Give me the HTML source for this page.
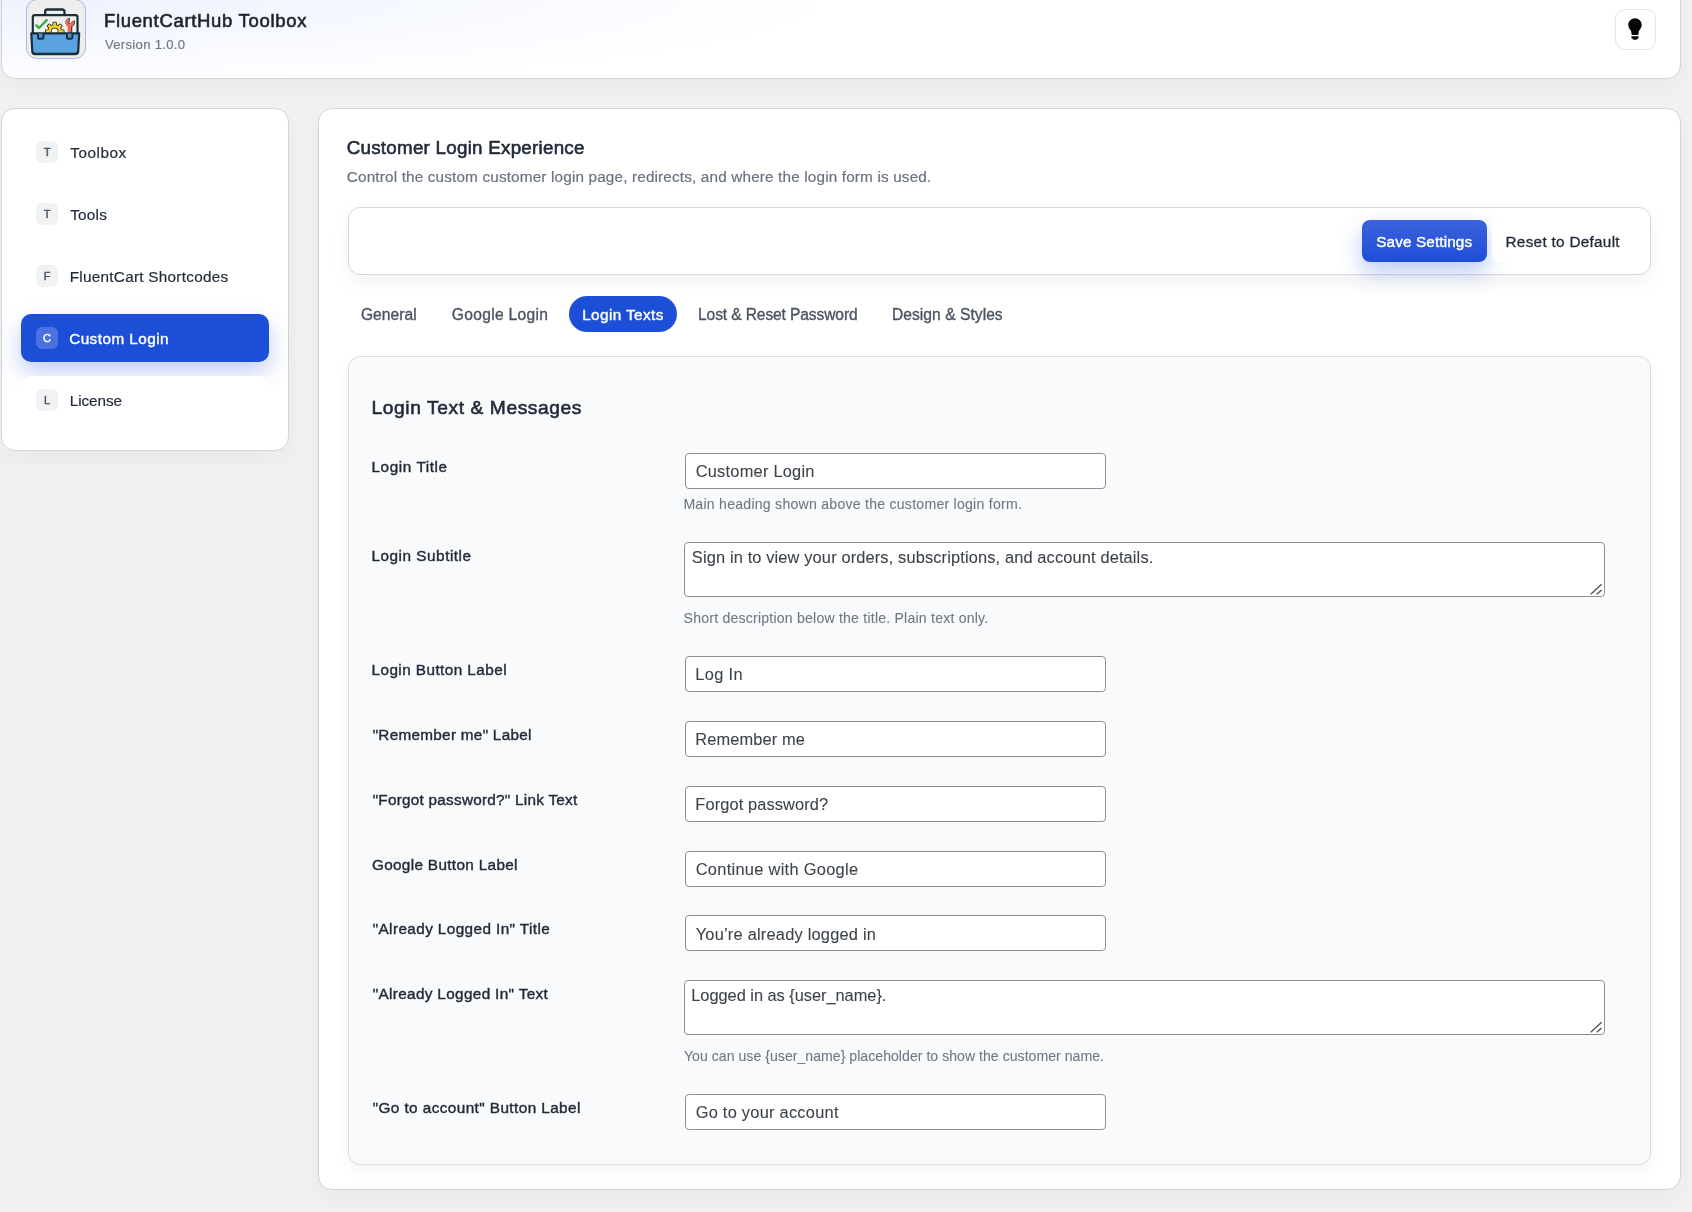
<!DOCTYPE html>
<html lang="en">
<head>
<meta charset="utf-8">
<title>FluentCartHub Toolbox</title>
<style>
*{box-sizing:border-box;margin:0;padding:0}
h1,h2,h3,p,label,a{font-weight:400;text-decoration:none}
html,body{width:1692px;height:1212px;overflow:hidden}
body{background:#f0f0f1;opacity:.999;font-family:"Liberation Sans",sans-serif;color:#1f2937;position:relative}
.abs{position:absolute}
.t{position:absolute;white-space:nowrap;line-height:1;-webkit-text-stroke:.2px currentColor}

/* header */
#hdr{left:1px;top:-21px;width:1680px;height:100px;border:1px solid #cfd4e0;border-radius:14px;
 background:radial-gradient(ellipse 800px 92px at 30px 16px,#edf2fe 0%,rgba(255,255,255,0) 100%),#fff;
 box-shadow:0 8px 24px rgba(15,23,42,.035)}
#logo{left:26px;top:-1px;width:60px;height:60px;border:1px solid #a9b8ee;border-radius:11px;background:#efeeec;overflow:hidden}
#logo svg{position:absolute;left:-1px;top:-1px}
#bulb{left:1615px;top:9px;width:41px;height:41px;border:1px solid #e3e6ed;border-radius:10px;background:#fff}
#bulb svg{position:absolute;left:6.5px;top:6.5px}

/* sidebar */
#side{left:1px;top:108px;width:288px;height:343px;border:1px solid #cfd4e0;border-radius:14px;background:#fff;
 box-shadow:0 8px 24px rgba(15,23,42,.04)}
.ic{position:absolute;left:36px;width:22px;height:22px;border-radius:6px;background:#f1f2f4;
 font-size:11px;color:#475063;text-align:center;line-height:22px;-webkit-text-stroke:.4px currentColor}
.ic.on{background:rgba(255,255,255,.2);color:#fff}
#navon{left:21px;top:314px;width:248px;height:48px;border-radius:10px;background:#1d4ed8;box-shadow:0 10px 22px rgba(29,78,216,.28)}
#navl{left:21px;top:376px;width:248px;height:48px;border-radius:10px;background:#fff}

/* main */
#main{left:318px;top:108px;width:1363px;height:1082px;border:1px solid #cfd4e0;border-radius:14px;background:#fff;
 box-shadow:0 8px 24px rgba(15,23,42,.04)}
#bar{left:348px;top:207px;width:1303px;height:68px;border:1px solid #d5d8e0;border-radius:12px;background:#fff;
 box-shadow:0 8px 20px rgba(15,23,42,.05)}
#save{left:1362px;top:220px;width:125px;height:42px;border-radius:8px;
 background:linear-gradient(180deg,#3d62dc 0%,#1d4ed8 100%);box-shadow:0 10px 22px rgba(29,78,216,.30)}
#reset{left:1492px;top:220px;width:144px;height:42px;border-radius:8px;background:#fff}
#pill{left:569px;top:296px;width:108px;height:36px;border-radius:18px;background:#1d4ed8}

#panel{left:348px;top:356px;width:1303px;height:809px;border:1px solid #dadde5;border-radius:12px;background:#f9fafb;
 box-shadow:0 6px 14px rgba(15,23,42,.045)}
.inp{position:absolute;left:685px;width:421px;height:36px;border:1px solid #8c8f94;border-radius:4px;background:#fff;
 font:16.4px "Liberation Sans",sans-serif;color:#3c434a;padding:0 8px 0 10px;outline:none;-webkit-text-stroke:.08px currentColor}
textarea.ta{position:absolute;left:684px;width:921px;height:55px;border:1px solid #8c8f94;border-radius:4px;background:#fff;
 font:16.4px "Liberation Sans",sans-serif;color:#3c434a;padding:5px 7px;line-height:20px;outline:none;resize:none;overflow:hidden;-webkit-text-stroke:.08px currentColor}
.rz{position:absolute;left:1589px;width:16px;height:16px}
</style>
</head>
<body>

<header>
<div id="hdr" class="abs"></div>
<div id="logo" class="abs">
<svg width="60" height="60" viewBox="0 0 60 60">
<path d="M19.2,16 V12.6 a2.1,2.1 0 0 1 2.1,-2.1 H36.4 a2.1,2.1 0 0 1 2.1,2.1 V16" fill="none" stroke="#1b2e3c" stroke-width="2.3"/>
<path d="M6.8,34 V18.2 a2.1,2.1 0 0 1 2.1,-2.1 H49.4 a2.1,2.1 0 0 1 2.1,2.1 V34" fill="#f1f0ee" stroke="#1b2e3c" stroke-width="2.2"/>
<path d="M10.3,26.4 L13,29 L20.7,21.1" fill="none" stroke="#36a852" stroke-width="2.3" stroke-linecap="round" stroke-linejoin="round"/>
<path d="M27.18,26.18 L27.50,23.58 L29.90,23.58 L30.22,26.18 L32.10,26.96 L34.16,25.35 L35.85,27.04 L34.24,29.10 L35.02,30.98 L37.62,31.30 L37.62,33.70 L35.02,34.02 L34.24,35.90 L35.85,37.96 L34.16,39.65 L32.10,38.04 L30.22,38.82 L29.90,41.42 L27.50,41.42 L27.18,38.82 L25.30,38.04 L23.24,39.65 L21.55,37.96 L23.16,35.90 L22.38,34.02 L19.78,33.70 L19.78,31.30 L22.38,30.98 L23.16,29.10 L21.55,27.04 L23.24,25.35 L25.30,26.96Z" fill="#f4c61f" stroke="#1b2e3c" stroke-width="1.7" stroke-linejoin="round"/>
<path d="M27.18,26.18 L27.50,23.58 L29.90,23.58 L30.22,26.18 L32.10,26.96 L34.16,25.35 L35.85,27.04 L34.24,29.10 L35.02,30.98 L37.62,31.30 L37.62,33.70 L35.02,34.02 L34.24,35.90 L35.85,37.96 L34.16,39.65 L32.10,38.04 L30.22,38.82 L29.90,41.42 L27.50,41.42 L27.18,38.82 L25.30,38.04 L23.24,39.65 L21.55,37.96 L23.16,35.90 L22.38,34.02 L19.78,33.70 L19.78,31.30 L22.38,30.98 L23.16,29.10 L21.55,27.04 L23.24,25.35 L25.30,26.96Z" fill="#f7cd22"/>
<circle cx="28.7" cy="32.5" r="3.7" fill="#1b2e3c"/>
<circle cx="28.7" cy="32.5" r="2.9" fill="#fdfdfb"/>
<g transform="translate(.45,-.25)"><path d="M46.43,22.37 A2.9,2.9 0 1 1 43.55,20.71" fill="none" stroke="#1b2e3c" stroke-width="3.6"/><rect x="41.9" y="25.5" width="3.9" height="9" fill="#1b2e3c"/></g>
<path d="M46.43,22.37 A2.9,2.9 0 1 1 43.55,20.71" fill="none" stroke="#ec6a57" stroke-width="2.9"/>
<rect x="41.6" y="25.5" width="3.7" height="9" fill="#ec6a57"/>
<path d="M5.3,34.3 H53.2 L52.2,52.4 a2.6,2.6 0 0 1 -2.6,2.4 H8.9 a2.6,2.6 0 0 1 -2.6,-2.4 Z" fill="#5aa2e0" stroke="#1b2e3c" stroke-width="2.2" stroke-linejoin="round"/>
<path d="M6.6,53.2 a2.6,2.6 0 0 0 2.5,1.9 H49.4 a2.6,2.6 0 0 0 2.5,-1.9" fill="none" stroke="#1b2e3c" stroke-width="2.3"/>
<path d="M12,34.5 V38.2 a1.6,1.6 0 0 0 1.6,1.6 h2.2 a1.6,1.6 0 0 0 1.6,-1.6 V34.5" fill="#4c8fd0" stroke="#1b2e3c" stroke-width="2"/>
<path d="M41,34.5 V38.2 a1.6,1.6 0 0 0 1.6,1.6 h2.2 a1.6,1.6 0 0 0 1.6,-1.6 V34.5" fill="#4c8fd0" stroke="#1b2e3c" stroke-width="2"/>
</svg>
</div>
<h1 class="t" id="ht" style="left:103.92px;top:12.34px;font-size:18.5px;letter-spacing:0.681px;color:#1e242c;-webkit-text-stroke:.6px currentColor;">FluentCartHub Toolbox</h1>
<p class="t" id="hv" style="left:104.92px;top:37.60px;font-size:13.0px;letter-spacing:0.353px;color:#717988;">Version 1.0.0</p>
<div id="bulb" class="abs"><svg width="24" height="24" viewBox="0 0 20 20"><path fill="#050505" d="M10 1c3.11 0 5.63 2.52 5.63 5.62 0 1.84-2.03 4.58-2.03 4.58-.33.44-.6 1.25-.6 1.8v1c0 .55-.45 1-1 1H8c-.55 0-1-.45-1-1v-1c0-.55-.27-1.36-.6-1.8 0 0-2.02-2.74-2.02-4.58C4.38 3.52 6.89 1 10 1zM7 16.87V16h6v.87c0 .62-.13 1.13-.75 1.13H12c0 .62-.4 1-1.02 1h-2c-.61 0-.98-.38-.98-1h-.25c-.62 0-.75-.51-.75-1.13z"/></svg></div>

</header>
<nav>
<div id="side" class="abs"></div>
<div id="navon" class="abs"></div>
<div id="navl" class="abs"></div>
<span class="ic" style="top:141px">T</span><a class="t" id="n1" style="left:70.26px;top:144.55px;font-size:15.3px;letter-spacing:0.533px;color:#1f2937;">Toolbox</a>
<span class="ic" style="top:203px">T</span><a class="t" id="n2" style="left:70.26px;top:206.55px;font-size:15.3px;letter-spacing:0.225px;color:#1f2937;">Tools</a>
<span class="ic" style="top:265px">F</span><a class="t" id="n3" style="left:69.74px;top:268.75px;font-size:15.3px;letter-spacing:0.267px;color:#1f2937;">FluentCart Shortcodes</a>
<span class="ic on" style="top:327px">C</span><a class="t" id="n4" style="left:69.14px;top:330.65px;font-size:15.3px;letter-spacing:0.465px;color:#fff;-webkit-text-stroke:.4px currentColor;">Custom Login</a>
<span class="ic" style="top:389px">L</span><a class="t" id="n5" style="left:69.74px;top:392.65px;font-size:15.3px;letter-spacing:-0.080px;color:#1f2937;">License</a>

</nav>
<main>
<div id="main" class="abs"></div>
<h2 class="t" id="pt" style="left:346.70px;top:139.49px;font-size:18.8px;letter-spacing:0.249px;color:#1f2937;-webkit-text-stroke:.6px currentColor;">Customer Login Experience</h2>
<p class="t" id="ps" style="left:346.82px;top:169.35px;font-size:15.3px;letter-spacing:0.157px;color:#6b7280;">Control the custom customer login page, redirects, and where the login form is used.</p>
<div id="bar" class="abs"></div>
<div id="save" class="abs"></div>
<div id="reset" class="abs"></div>
<span class="t" id="bs" style="left:1376.18px;top:233.75px;font-size:15.3px;letter-spacing:0.127px;color:#fff;-webkit-text-stroke:.4px currentColor;">Save Settings</span>
<span class="t" id="br" style="left:1505.54px;top:233.75px;font-size:15.3px;letter-spacing:0.293px;color:#1f2937;-webkit-text-stroke:.3px currentColor;">Reset to Default</span>

<div id="pill" class="abs"></div>
<a class="t" id="t1" style="left:360.94px;top:306.89px;font-size:15.6px;letter-spacing:0.040px;color:#4b5563;-webkit-text-stroke:.35px currentColor;">General</a>
<a class="t" id="t2" style="left:451.82px;top:306.89px;font-size:15.6px;letter-spacing:0.309px;color:#4b5563;-webkit-text-stroke:.35px currentColor;">Google Login</a>
<a class="t" id="t3" style="left:582.18px;top:307.15px;font-size:15.3px;letter-spacing:0.404px;color:#fff;-webkit-text-stroke:.4px currentColor;">Login Texts</a>
<a class="t" id="t4" style="left:698.06px;top:306.89px;font-size:15.6px;letter-spacing:-0.125px;color:#4b5563;-webkit-text-stroke:.35px currentColor;">Lost &amp; Reset Password</a>
<a class="t" id="t5" style="left:892.02px;top:306.89px;font-size:15.6px;letter-spacing:0.041px;color:#4b5563;-webkit-text-stroke:.35px currentColor;">Design &amp; Styles</a>

<div id="panel" class="abs"></div>
<h3 class="t" id="st" style="left:371.54px;top:398.35px;font-size:19.2px;letter-spacing:0.594px;color:#1f2937;-webkit-text-stroke:.6px currentColor;">Login Text &amp; Messages</h3>

<label class="t" id="l1" for="f1" style="left:371.50px;top:458.75px;font-size:15.3px;letter-spacing:0.584px;color:#1f2937;-webkit-text-stroke:.4px currentColor;">Login Title</label>
<input class="inp" id="f1" style="top:453px;padding-left:9.70px;padding-top:0.00px;letter-spacing:0.234px" value="Customer Login">
<p class="t" id="h1" style="left:683.38px;top:496.96px;font-size:14.1px;letter-spacing:0.245px;color:#6f7785;-webkit-text-stroke:.08px currentColor;">Main heading shown above the customer login form.</p>

<label class="t" id="l2" for="f2" style="left:371.50px;top:547.75px;font-size:15.3px;letter-spacing:0.526px;color:#1f2937;-webkit-text-stroke:.4px currentColor;">Login Subtitle</label>
<textarea class="ta" id="f2" style="top:542px;padding-left:6.86px;padding-top:4.00px;letter-spacing:0.137px">Sign in to view your orders, subscriptions, and account details.</textarea>
<svg class="rz" style="top:581px" viewBox="0 0 16 16"><path d="M1.7 13.2L12.6 3.2M7.7 13.2L12.6 8.9" stroke="#4d4d4d" stroke-width="1.3" fill="none"/></svg>
<p class="t" id="h2" style="left:683.56px;top:610.86px;font-size:14.1px;letter-spacing:0.208px;color:#6f7785;-webkit-text-stroke:.08px currentColor;">Short description below the title. Plain text only.</p>

<label class="t" id="l3" for="f3" style="left:371.50px;top:661.65px;font-size:15.3px;letter-spacing:0.438px;color:#1f2937;-webkit-text-stroke:.4px currentColor;">Login Button Label</label>
<input class="inp" id="f3" style="top:656px;padding-left:9.30px;padding-top:0.00px;letter-spacing:0.336px" value="Log In">

<label class="t" id="l4" for="f4" style="left:372.66px;top:726.85px;font-size:15.3px;letter-spacing:0.282px;color:#1f2937;-webkit-text-stroke:.4px currentColor;">"Remember me" Label</label>
<input class="inp" id="f4" style="top:721px;padding-left:9.30px;padding-top:0.00px;letter-spacing:0.130px" value="Remember me">

<label class="t" id="l5" for="f5" style="left:372.66px;top:791.75px;font-size:15.3px;letter-spacing:0.256px;color:#1f2937;-webkit-text-stroke:.4px currentColor;">"Forgot password?" Link Text</label>
<input class="inp" id="f5" style="top:786px;padding-left:9.30px;padding-top:0.00px;letter-spacing:0.103px" value="Forgot password?">

<label class="t" id="l6" for="f6" style="left:371.90px;top:856.95px;font-size:15.3px;letter-spacing:0.340px;color:#1f2937;-webkit-text-stroke:.4px currentColor;">Google Button Label</label>
<input class="inp" id="f6" style="top:851px;padding-left:9.70px;padding-top:0.00px;letter-spacing:0.299px" value="Continue with Google">

<label class="t" id="l7" for="f7" style="left:372.66px;top:921.05px;font-size:15.3px;letter-spacing:0.408px;color:#1f2937;-webkit-text-stroke:.4px currentColor;">"Already Logged In" Title</label>
<input class="inp" id="f7" style="top:915px;padding-left:9.70px;padding-top:2.00px;letter-spacing:0.217px" value="You’re already logged in">

<label class="t" id="l8" for="f8" style="left:372.66px;top:985.85px;font-size:15.3px;letter-spacing:0.350px;color:#1f2937;-webkit-text-stroke:.4px currentColor;">"Already Logged In" Text</label>
<textarea class="ta" id="f8" style="top:980px;padding-left:6.26px;padding-top:4.00px;letter-spacing:-0.033px">Logged in as {user_name}.</textarea>
<svg class="rz" style="top:1019px" viewBox="0 0 16 16"><path d="M1.7 13.2L12.6 3.2M7.7 13.2L12.6 8.9" stroke="#4d4d4d" stroke-width="1.3" fill="none"/></svg>
<p class="t" id="h3" style="left:683.98px;top:1048.76px;font-size:14.1px;letter-spacing:0.023px;color:#6f7785;-webkit-text-stroke:.08px currentColor;">You can use {user_name} placeholder to show the customer name.</p>

<label class="t" id="l9" for="f9" style="left:372.66px;top:1099.85px;font-size:15.3px;letter-spacing:0.424px;color:#1f2937;-webkit-text-stroke:.4px currentColor;">"Go to account" Button Label</label>
<input class="inp" id="f9" style="top:1094px;padding-left:9.70px;padding-top:0.00px;letter-spacing:0.252px" value="Go to your account">

</main>
</body>
</html>
